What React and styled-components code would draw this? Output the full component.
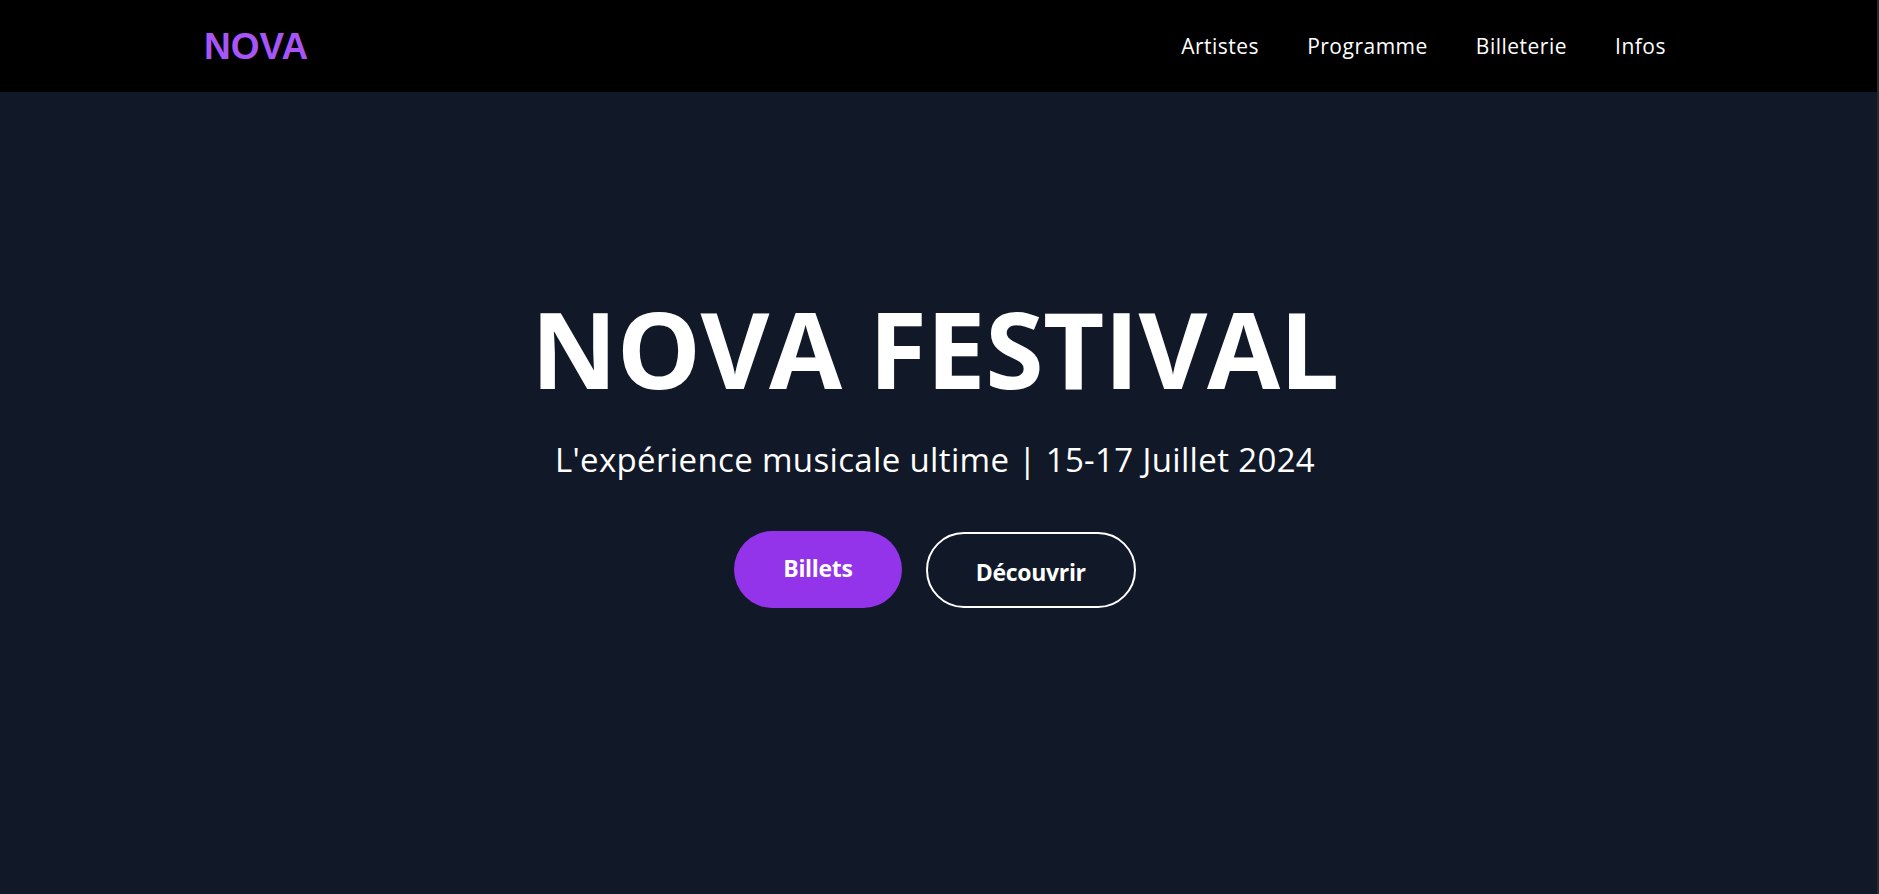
import React from "react";
import styled, { createGlobalStyle } from "styled-components";

const GlobalStyle = createGlobalStyle`
  html, body {
    margin: 0;
    padding: 0;
    background: #2b2b2b;
  }
  body {
    font-family: "Open Sans", "Noto Sans", "DejaVu Sans", sans-serif;
    -webkit-font-smoothing: antialiased;
  }
  * { box-sizing: border-box; }
`;

const Page = styled.div`
  margin-right: 2px;
  min-height: 100vh;
  background: #111827;
  color: #ffffff;
  display: flex;
  flex-direction: column;
`;

const Header = styled.header`
  height: 92px;
  background: #000000;
  display: flex;
  align-items: center;
  justify-content: space-between;
  padding: 0 211px 0 204px;
`;

const Logo = styled.a`
  font-family: "Liberation Sans", Arial, sans-serif;
  font-weight: 700;
  font-size: 37px;
  color: #a855f7;
  text-decoration: none;
  line-height: 1;
  margin-top: 1px;
`;

const Nav = styled.nav`
  display: flex;
  align-items: center;
  gap: 48px;
  margin-top: 2px;
`;

const NavLink = styled.a`
  font-size: 21px;
  color: #ffffff;
  text-decoration: none;
  line-height: 1.2;
  letter-spacing: 0.5px;
`;

const Hero = styled.main`
  flex: 1;
  display: flex;
  flex-direction: column;
  align-items: center;
  padding: 203px 7px 0 0;
`;

const Title = styled.h1`
  margin: 0;
  font-size: 106px;
  font-weight: 700;
  line-height: 1;
  letter-spacing: -0.5px;
  color: #ffffff;
`;

const Subtitle = styled.p`
  margin: 39px 0 0;
  font-size: 33px;
  font-weight: 400;
  line-height: 1.2;
  letter-spacing: 0.35px;
  color: #ffffff;
`;

const Actions = styled.div`
  display: flex;
  gap: 24px;
  margin-top: 51px;
`;

const Button = styled.a`
  display: inline-flex;
  justify-content: center;
  align-items: flex-start;
  border-radius: 999px;
  font-size: 23px;
  font-weight: 700;
  line-height: 1.2;
  letter-spacing: -0.3px;
  color: #ffffff;
  text-decoration: none;
  cursor: pointer;
  padding: ${(p) => (p.$outline ? "25px 48px 0" : "24px 49px 0")};
  background: ${(p) => (p.$outline ? "transparent" : "#9333ea")};
  border: ${(p) => (p.$outline ? "2.5px solid #ffffff" : "none")};
  margin-top: ${(p) => (p.$outline ? "1px" : "0")};
  height: ${(p) => (p.$outline ? "76px" : "77px")};
`;

export default function App() {
  return (
    <>
      <GlobalStyle />
      <Page>
        <Header>
          <Logo href="#">NOVA</Logo>
          <Nav>
            <NavLink href="#">Artistes</NavLink>
            <NavLink href="#">Programme</NavLink>
            <NavLink href="#">Billeterie</NavLink>
            <NavLink href="#">Infos</NavLink>
          </Nav>
        </Header>
        <Hero>
          <Title>NOVA FESTIVAL</Title>
          <Subtitle>L'expérience musicale ultime | 15-17 Juillet 2024</Subtitle>
          <Actions>
            <Button href="#">Billets</Button>
            <Button href="#" $outline>
              Découvrir
            </Button>
          </Actions>
        </Hero>
      </Page>
    </>
  );
}
